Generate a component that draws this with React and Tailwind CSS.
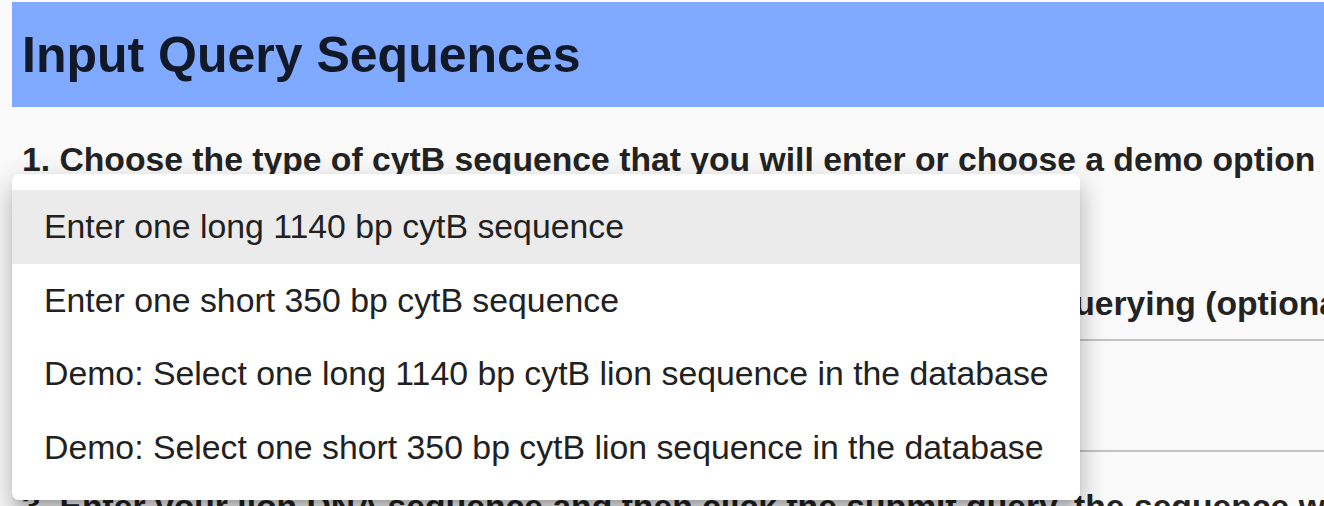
const options = [
  "Enter one long 1140 bp cytB sequence",
  "Enter one short 350 bp cytB sequence",
  "Demo: Select one long 1140 bp cytB lion sequence in the database",
  "Demo: Select one short 350 bp cytB lion sequence in the database",
];

function OptionMenu({ active }) {
  return (
    <div className="absolute left-[12px] top-[174px] w-[1068px] rounded-[7px] bg-white py-[16px] shadow-[0_10px_10px_-6px_rgba(0,0,0,0.2),0_17px_21px_2px_rgba(0,0,0,0.14),0_6px_29px_4px_rgba(0,0,0,0.12)]">
      {options.map((opt, i) => (
        <div
          key={i}
          className={`flex h-[73.5px] items-center pl-[32px] text-[33.8px] leading-[1.5] text-[#212121] ${
            i === active ? "bg-[#ebebeb]" : ""
          }`}
        >
          {opt}
        </div>
      ))}
    </div>
  );
}

export default function App() {
  return (
    <div className="relative h-[506px] w-[1324px] overflow-hidden bg-[#fafafa] font-['Liberation_Sans',Arial,sans-serif]">
      <header className="ml-[12px] mt-[2px] flex h-[105px] items-center bg-[#80aaff] pl-[10px]">
        <h1 className="text-[50px] font-bold leading-none text-[#111827]">
          Input Query Sequences
        </h1>
      </header>

      <section className="pl-[22px] text-[33.7px] font-bold leading-[1.5] text-[#232323]">
        <p className="mt-[27px] whitespace-nowrap">
          1. Choose the type of cytB sequence that you will enter or choose a demo option
        </p>
        <div className="h-[93px]" />
        <p className="whitespace-nowrap">
          2. Select The Lion subspecies reference dataset you will use for querying (optional)
        </p>
        <div className="mt-[11px] h-[113px] w-[1400px] rounded-[8px] border-2 border-[#c2c2c2] bg-[#fafafa]" />
        <p className="mt-[29px] whitespace-nowrap">
          3. Enter your lion DNA sequence and then click the submit query, the sequence will be compared
        </p>
      </section>

      <OptionMenu active={0} />
    </div>
  );
}
